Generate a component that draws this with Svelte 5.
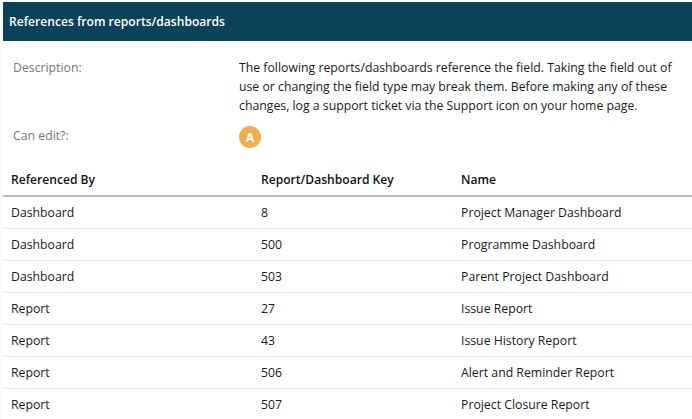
<script>
  const rows = [
    ["Dashboard", "8", "Project Manager Dashboard"],
    ["Dashboard", "500", "Programme Dashboard"],
    ["Dashboard", "503", "Parent Project Dashboard"],
    ["Report", "27", "Issue Report"],
    ["Report", "43", "Issue History Report"],
    ["Report", "506", "Alert and Reminder Report"],
    ["Report", "507", "Project Closure Report"]
  ];
</script>

<div class="page">
  <h2 class="banner">References from reports/dashboards</h2>

  <dl class="fields">
    <dt>Description:</dt>
    <dd>
      The following reports/dashboards reference the field. Taking the field out of use or changing the field type may break them. Before making any of these changes, log a support ticket via the Support icon on your home page.
    </dd>
    <dt class="edit">Can edit?:</dt>
    <dd class="edit"><span class="badge">A</span></dd>
  </dl>

  <table>
    <thead>
      <tr>
        <th>Referenced By</th>
        <th>Report/Dashboard Key</th>
        <th>Name</th>
      </tr>
    </thead>
    <tbody>
      {#each rows as row}
        <tr>
          {#each row as cell}
            <td>{cell}</td>
          {/each}
        </tr>
      {/each}
    </tbody>
  </table>
</div>

<style>
  :global(body) {
    background: #fafafa;
    overflow: hidden;
  }
  .page {
    margin-left: 3px;
    padding-top: 2px;
    height: 417px;
    overflow: hidden;
    background: #fff;
    font-family: "Open Sans", sans-serif;
    font-size: 12.27px;
    color: #1a1a1a;
  }
  .banner {
    margin: 0;
    height: 39px;
    padding-left: 6px;
    line-height: 40px;
    font-size: 12.1px;
    font-weight: 600;
    color: #fff;
    background: #0b4259;
  }
  .fields {
    display: grid;
    grid-template-columns: 226px 1fr;
    margin: 0;
    padding: 17px 10px 0 10px;
    line-height: 19px;
  }
  dt {
    color: #777;
  }
  dd {
    margin: 0;
  }
  .edit {
    margin-top: 11px;
  }
  .badge {
    display: flex;
    align-items: center;
    justify-content: center;
    width: 22px;
    height: 22px;
    border-radius: 50%;
    background: #f0ad4e;
    color: #fff;
    font-weight: 700;
  }
  table {
    width: 100%;
    margin-top: 12px;
    border-collapse: collapse;
    table-layout: fixed;
  }
  th {
    height: 32px;
    padding: 3px 8px 0;
    text-align: left;
    font-size: 12.1px;
    font-weight: 600;
    color: #111;
    border-bottom: 2px solid #bbb;
  }
  th:nth-child(1) {
    width: 234px;
  }
  th:nth-child(2) {
    width: 184px;
  }
  td {
    height: 31px;
    padding: 0 8px;
    border-bottom: 1px solid #eee;
  }
</style>
